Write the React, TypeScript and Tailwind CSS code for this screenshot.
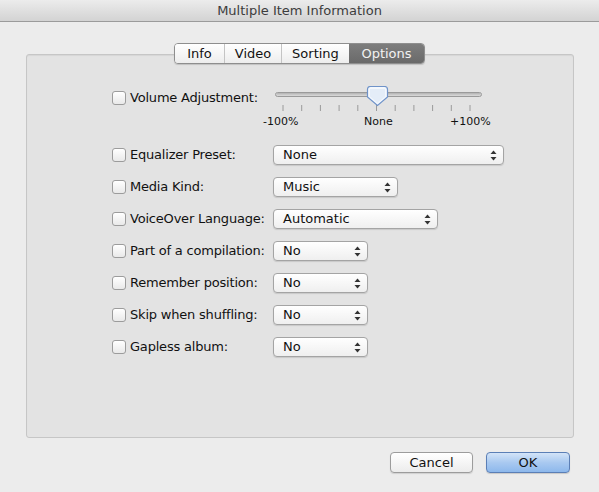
import React from "react";

const font = { fontFamily: '"DejaVu Sans", "Liberation Sans", sans-serif' };

function Checkbox() {
  return (
    <span className="inline-block w-[14px] h-[14px] shrink-0 rounded-[3px] border border-[#9c9c9c] bg-gradient-to-b from-[#ffffff] to-[#e9e9e9] shadow-[inset_0_1px_0_#fff]" />
  );
}

function Arrows() {
  return (
    <svg width="7" height="11" viewBox="0 0 7 11" className="shrink-0">
      <path d="M3.5 0.5 L6.5 4 L0.5 4 Z" fill="#333" />
      <path d="M3.5 10.5 L6.5 7 L0.5 7 Z" fill="#333" />
    </svg>
  );
}

function Popup({ value, width }: { value: string; width: string }) {
  return (
    <div
      className={`${width} h-[20px] flex items-center justify-between pl-[9px] pr-[6px] rounded-[4px] border border-[#a4a4a4] bg-gradient-to-b from-[#ffffff] to-[#efefef] shadow-[0_1px_1px_rgba(0,0,0,0.12)] text-[13px] text-[#111]`}
    >
      <span>{value}</span>
      <Arrows />
    </div>
  );
}

function Row({ label, children }: { label: string; children: React.ReactNode }) {
  return (
    <div className="flex items-center h-[20px]">
      <div className="w-[161px] flex items-center gap-[4px] text-[13px] tracking-[-0.2px] text-[#111]">
        <Checkbox />
        <span>{label}</span>
      </div>
      {children}
    </div>
  );
}

function Slider() {
  const ticks = Array.from({ length: 11 }, (_, i) => 8 + i * 18.7);
  return (
    <div className="w-[215px] flex flex-col">
      <svg width="215" height="28" viewBox="0 0 215 28">
        <rect x="0.5" y="6.5" width="206" height="4" rx="2" fill="#d4d4d4" stroke="#9a9a9a" />
        <rect x="1.5" y="7" width="204" height="1.5" fill="#b9b9b9" />
        {ticks.map((x) => (
          <line key={x} x1={x} y1="19" x2={x} y2="25" stroke="#9a9a9a" strokeWidth="1" />
        ))}
        <path
          d="M95.5 0.5 H109.5 Q112.5 0.5 112.5 3.5 V11 L102.5 19.5 L92.5 11 V3.5 Q92.5 0.5 95.5 0.5 Z"
          fill="#f4f8fd"
          stroke="#6f93c9"
          strokeWidth="1.2"
        />
        <path d="M95 3 H110 V10.5 L102.5 17 L95 10.5 Z" fill="#e4edf8" />
      </svg>
      <div className="relative h-[14px] text-[11px] text-[#111]">
        <span className="absolute left-[-12px] top-0">-100%</span>
        <span className="absolute left-[89px] top-0">None</span>
        <span className="absolute left-[175px] top-0">+100%</span>
      </div>
    </div>
  );
}

export default function App() {
  const tabs = ["Info", "Video", "Sorting", "Options"];
  const tabWidths = ["w-[49px]", "w-[57px]", "w-[68px]", "w-[75px]"];

  return (
    <div className="w-[599px] h-[492px] flex flex-col bg-[#ececec] overflow-hidden" style={font}>
      {/* Title bar */}
      <div className="h-[22px] shrink-0 flex items-center justify-center bg-gradient-to-b from-[#ececec] to-[#d3d3d3] border-b border-[#9b9b9b] text-[13px] text-[#3c3c3c]">
        Multiple Item Information
      </div>

      <div className="flex-1 flex flex-col px-[26px] pt-[21px]">
        {/* Tabs */}
        <div className="flex justify-center relative z-10 -mb-[10px]">
          <div className="flex h-[21px] rounded-[4px] border border-[#8e8e8e] overflow-hidden shadow-[0_1px_1px_rgba(0,0,0,0.15)] text-[13px]">
            {tabs.map((t, i) => (
              <div
                key={t}
                className={`${tabWidths[i]} flex items-center justify-center ${
                  t === "Options"
                    ? "bg-gradient-to-b from-[#7d7d7d] to-[#6a6a6a] text-[#f2f2f2]"
                    : "bg-gradient-to-b from-[#ffffff] to-[#ededed] text-[#111]"
                } ${i > 0 && i < 3 ? "border-l border-[#c4c4c4]" : ""}`}
              >
                {t}
              </div>
            ))}
          </div>
        </div>

        {/* Group box */}
        <div className="h-[384px] w-[548px] rounded-[3px] border border-[#c6c6c6] bg-[#e3e3e3] shadow-[inset_0_1px_1px_rgba(0,0,0,0.06)] pl-[85px] pt-[33px]">
          <div className="flex items-start">
            <div className="w-[161px] flex items-center gap-[4px] h-[20px] text-[13px] tracking-[-0.2px] text-[#111]">
              <Checkbox />
              <span>Volume Adjustment:</span>
            </div>
            <div className="-mt-[2px] ml-[2px]">
              <Slider />
            </div>
          </div>

          <div className="flex flex-col gap-[12px] mt-[17px]">
            <Row label="Equalizer Preset:">
              <Popup value="None" width="w-[231px]" />
            </Row>
            <Row label="Media Kind:">
              <Popup value="Music" width="w-[125px]" />
            </Row>
            <Row label="VoiceOver Language:">
              <Popup value="Automatic" width="w-[165px]" />
            </Row>
            <Row label="Part of a compilation:">
              <Popup value="No" width="w-[95px]" />
            </Row>
            <Row label="Remember position:">
              <Popup value="No" width="w-[95px]" />
            </Row>
            <Row label="Skip when shuffling:">
              <Popup value="No" width="w-[95px]" />
            </Row>
            <Row label="Gapless album:">
              <Popup value="No" width="w-[95px]" />
            </Row>
          </div>
        </div>

        {/* Buttons */}
        <div className="flex justify-end gap-[13px] mt-[14px] pr-[3px]">
          <button className="w-[83px] h-[21px] rounded-[4px] border border-[#9c9c9c] bg-gradient-to-b from-[#ffffff] to-[#ececec] shadow-[0_1px_1px_rgba(0,0,0,0.12)] text-[13px] text-[#111]">
            Cancel
          </button>
          <button className="w-[84px] h-[21px] rounded-[4px] border border-[#5b7fb6] bg-gradient-to-b from-[#d3e4f8] via-[#a9c9f0] to-[#8db8ec] shadow-[0_1px_1px_rgba(0,0,0,0.15)] text-[13px] text-[#111]">
            OK
          </button>
        </div>
      </div>
    </div>
  );
}
